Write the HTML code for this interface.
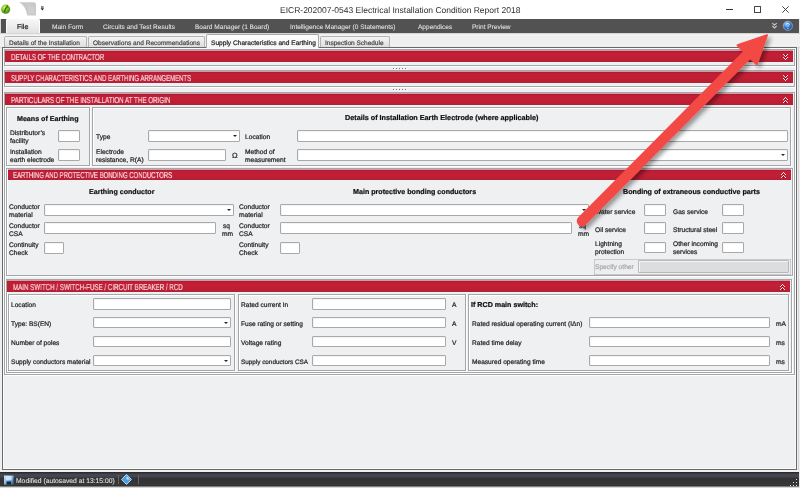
<!DOCTYPE html>
<html><head><meta charset="utf-8"><style>
html,body{margin:0;padding:0;width:800px;height:488px;overflow:hidden;background:#efefef;}
body{position:relative;font-family:"Liberation Sans",sans-serif;-webkit-font-smoothing:antialiased;text-rendering:geometricPrecision;}
body>div,body>svg{position:absolute;}
.t{white-space:nowrap;-webkit-text-stroke-width:0.22px;will-change:transform;}
</style></head><body>
<div style="left:0px;top:0px;width:800px;height:19px;background:#fff"></div>
<svg style="left:0px;top:3px" width="12" height="12" viewBox="0 0 12 12"><defs><radialGradient id="ag" cx="0.38" cy="0.32" r="0.75"><stop offset="0" stop-color="#d6f070"/><stop offset="0.45" stop-color="#86c42a"/><stop offset="1" stop-color="#3a7a0c"/></radialGradient></defs><circle cx="5.6" cy="6.2" r="4.6" fill="url(#ag)"/><path d="M4.2,8.8 C5.8,7.6 4.6,5.6 6.4,4.6 C7.2,4.1 7.6,3.6 7.4,3" fill="none" stroke="#2f6e08" stroke-width="1.3" stroke-linecap="round"/></svg>
<svg style="left:18px;top:1px" width="20" height="16" viewBox="0 0 20 16"><path d="M1,1.2 L16.5,1.2 L18,3 L18,14.6 L9.2,14.6 C8.2,8 5.5,3.5 1,1.2 Z" fill="#c9c9c9"/><rect x="10.6" y="3.5" width="1" height="10" fill="#d8d8d8"/><rect x="12.5" y="6" width="4" height="7" fill="#cfcfcf"/></svg>
<svg style="left:40px;top:5px" width="5" height="7" viewBox="0 0 5 7"><rect x="1" y="1" width="2.6" height="2" fill="#888"/><path d="M0.6,3.2 L4,3.2 L2.3,5.4 Z" fill="#222"/></svg>
<div class="t" style="left:280px;top:2.6999999999999993px;height:14px;line-height:14px;font-size:8.5px;color:#2e2e2e;-webkit-text-stroke-width:0;">EICR-202007-0543 Electrical Installation Condition Report 2018</div>
<div style="left:726px;top:9px;width:7px;height:1px;background:#333"></div>
<div style="left:754px;top:6px;width:7px;height:6.5px;border:1px solid #444;box-sizing:border-box;border-radius:0.5px"></div>
<svg style="left:782px;top:6px" width="7" height="7" viewBox="0 0 7 7"><path d="M0.3,0.3 L6.7,6.7 M6.7,0.3 L0.3,6.7" stroke="#3a3a3a" stroke-width="0.95"/></svg>
<div style="left:0px;top:19px;width:800px;height:14px;background:#525252"></div>
<div style="left:6px;top:19px;width:34px;height:14px;background:linear-gradient(#f8f8f8,#ececec 55%,#e2e2e2);border-radius:1.5px 1.5px 0 0;box-shadow:inset 1px 0 0 #fdfdfd, inset -1px 0 0 #fdfdfd"></div>
<div style="left:0px;top:19px;width:1px;height:14px;background:#d8d8d8"></div>
<div class="t" style="left:17px;top:21.7px;height:12px;line-height:12px;font-size:7px;color:#222;">File</div>
<div class="t" style="left:52.4px;top:21.7px;height:12px;line-height:12px;font-size:6.55px;color:#e6e6e6;white-space:nowrap;-webkit-text-stroke-width:0.05px;">Main Form</div>
<div class="t" style="left:103px;top:21.7px;height:12px;line-height:12px;font-size:6.55px;color:#e6e6e6;white-space:nowrap;-webkit-text-stroke-width:0.05px;">Circuits and Test Results</div>
<div class="t" style="left:195.4px;top:21.7px;height:12px;line-height:12px;font-size:6.55px;color:#e6e6e6;white-space:nowrap;-webkit-text-stroke-width:0.05px;">Board Manager (1 Board)</div>
<div class="t" style="left:290px;top:21.7px;height:12px;line-height:12px;font-size:6.55px;color:#e6e6e6;white-space:nowrap;-webkit-text-stroke-width:0.05px;">Intelligence Manager (0 Statements)</div>
<div class="t" style="left:417.5px;top:21.7px;height:12px;line-height:12px;font-size:6.55px;color:#e6e6e6;white-space:nowrap;-webkit-text-stroke-width:0.05px;">Appendices</div>
<div class="t" style="left:471.7px;top:21.7px;height:12px;line-height:12px;font-size:6.55px;color:#e6e6e6;white-space:nowrap;-webkit-text-stroke-width:0.05px;">Print Preview</div>
<svg style="left:770px;top:21px" width="9" height="9" viewBox="-4.5 -4.5 9 9"><path d="M-2.2,-2.4 L0,-0.4 L2.2,-2.4 M-2.2,0.4 L0,2.4 L2.2,0.4" fill="none" stroke="#d0d0d0" stroke-width="1.1"/></svg>
<svg style="left:782px;top:20px" width="12" height="12" viewBox="0 0 12 12"><defs><radialGradient id="hg" cx="0.35" cy="0.3" r="0.75"><stop offset="0" stop-color="#a8d8f0"/><stop offset="0.45" stop-color="#3c84d8"/><stop offset="1" stop-color="#1646a0"/></radialGradient></defs><circle cx="5.8" cy="5.8" r="4.6" fill="url(#hg)" stroke="#b8c8dc" stroke-width="0.6"/><path d="M4.6,4.4 C4.6,2.9 7.3,2.9 7.3,4.4 C7.3,5.5 5.9,5.5 5.9,6.8" fill="none" stroke="#d8ecfa" stroke-width="1"/><circle cx="5.9" cy="8.3" r="0.6" fill="#d8ecfa"/></svg>
<div style="left:799px;top:19px;width:1px;height:14px;background:#e8e8e8"></div>
<div style="left:0px;top:33px;width:800px;height:15px;background:linear-gradient(#c8c8c8 0px,#e4e4e4 1px,#f8f8f8 2px,#efefef 3px,#efefef 12px,#f5f5f5 12px,#f5f5f5 13px,#dedede 14px)"></div>
<div style="left:4px;top:36px;width:83px;height:11px;background:linear-gradient(#f4f4f4,#e9e9e9 50%,#dedede);border:1px solid #b4b4b4;border-bottom:none;box-sizing:border-box;border-radius:2px 2px 0 0"></div>
<div class="t" style="left:8.5px;top:38.0px;height:12px;line-height:12px;font-size:6.5px;color:#4a4a4a;white-space:nowrap;">Details of the Installation</div>
<div style="left:88px;top:36px;width:117px;height:11px;background:linear-gradient(#f4f4f4,#e9e9e9 50%,#dedede);border:1px solid #b4b4b4;border-bottom:none;box-sizing:border-box;border-radius:2px 2px 0 0"></div>
<div class="t" style="left:92.5px;top:38.0px;height:12px;line-height:12px;font-size:6.5px;color:#4a4a4a;white-space:nowrap;">Observations and Recommendations</div>
<div style="left:320px;top:36px;width:70px;height:11px;background:linear-gradient(#f4f4f4,#e9e9e9 50%,#dedede);border:1px solid #b4b4b4;border-bottom:none;box-sizing:border-box;border-radius:2px 2px 0 0"></div>
<div class="t" style="left:324.5px;top:38.0px;height:12px;line-height:12px;font-size:6.5px;color:#4a4a4a;white-space:nowrap;">Inspection Schedule</div>
<div style="left:798px;top:47px;width:1px;height:423px;background:#d4d4d4"></div>
<div style="left:2px;top:47px;width:795px;height:423px;background:#eff0f2;border:1px solid #6a6a6a;box-sizing:border-box;box-shadow:inset 1px 1px 0 #fafafa, inset -1px -1px 0 #fafafa"></div>
<div style="left:206px;top:34px;width:113px;height:14px;background:linear-gradient(#fdfdfd,#f6f6f6);border:1px solid #a9a9a9;border-bottom:none;box-sizing:border-box;border-radius:2px 2px 0 0"></div>
<div class="t" style="left:211px;top:37.5px;height:12px;line-height:12px;font-size:6.6px;color:#252525;white-space:nowrap;">Supply Characteristics and Earthing</div>
<div style="left:4px;top:49px;width:791px;height:17px;border:1px solid #a4a7aa;box-sizing:border-box;box-shadow:inset 1px 1px 0 #fff, 1px 1px 0 #fff"></div>
<div style="left:5px;top:50px;width:788px;height:12px;background:linear-gradient(#d59aa6 0px,#d59aa6 1px,#b01a30 1px,#c21f36 3px,#c11f35 7px,#b91e33 11px,#a8243a 12px)"></div>
<div class="t" style="left:11px;top:50.7px;height:12px;line-height:12px;font-size:8.5px;color:#f7dde2;transform-origin:0 50%;transform:scaleX(0.715);white-space:nowrap;-webkit-text-stroke-width:0.18px;">DETAILS OF THE CONTRACTOR</div>
<svg style="left:783px;top:54px" width="5" height="6" shape-rendering="crispEdges"><rect x="0" y="0" width="1" height="1" fill="#f6e2e5"/><rect x="4" y="0" width="1" height="1" fill="#f6e2e5"/><rect x="1" y="1" width="1" height="1" fill="#f6e2e5"/><rect x="3" y="1" width="1" height="1" fill="#f6e2e5"/><rect x="2" y="2" width="1" height="1" fill="#f6e2e5"/><rect x="2" y="0" width="1" height="1" fill="#6e0c1c"/><rect x="2" y="1" width="1" height="1" fill="#9a1a2c"/><rect x="0" y="3" width="1" height="1" fill="#f6e2e5"/><rect x="4" y="3" width="1" height="1" fill="#f6e2e5"/><rect x="1" y="4" width="1" height="1" fill="#f6e2e5"/><rect x="3" y="4" width="1" height="1" fill="#f6e2e5"/><rect x="2" y="5" width="1" height="1" fill="#f6e2e5"/><rect x="2" y="3" width="1" height="1" fill="#6e0c1c"/><rect x="2" y="4" width="1" height="1" fill="#9a1a2c"/></svg>
<div style="left:4px;top:70px;width:791px;height:17px;border:1px solid #a4a7aa;box-sizing:border-box;box-shadow:inset 1px 1px 0 #fff, 1px 1px 0 #fff"></div>
<div style="left:5px;top:71px;width:788px;height:12px;background:linear-gradient(#d59aa6 0px,#d59aa6 1px,#b01a30 1px,#c21f36 3px,#c11f35 7px,#b91e33 11px,#a8243a 12px)"></div>
<div class="t" style="left:11px;top:71.7px;height:12px;line-height:12px;font-size:8.5px;color:#f7dde2;transform-origin:0 50%;transform:scaleX(0.706);white-space:nowrap;-webkit-text-stroke-width:0.18px;">SUPPLY CHARACTERISTICS AND EARTHING ARRANGEMENTS</div>
<svg style="left:783px;top:75px" width="5" height="6" shape-rendering="crispEdges"><rect x="0" y="0" width="1" height="1" fill="#f6e2e5"/><rect x="4" y="0" width="1" height="1" fill="#f6e2e5"/><rect x="1" y="1" width="1" height="1" fill="#f6e2e5"/><rect x="3" y="1" width="1" height="1" fill="#f6e2e5"/><rect x="2" y="2" width="1" height="1" fill="#f6e2e5"/><rect x="2" y="0" width="1" height="1" fill="#6e0c1c"/><rect x="2" y="1" width="1" height="1" fill="#9a1a2c"/><rect x="0" y="3" width="1" height="1" fill="#f6e2e5"/><rect x="4" y="3" width="1" height="1" fill="#f6e2e5"/><rect x="1" y="4" width="1" height="1" fill="#f6e2e5"/><rect x="3" y="4" width="1" height="1" fill="#f6e2e5"/><rect x="2" y="5" width="1" height="1" fill="#f6e2e5"/><rect x="2" y="3" width="1" height="1" fill="#6e0c1c"/><rect x="2" y="4" width="1" height="1" fill="#9a1a2c"/></svg>
<div style="left:394px;top:69px;width:1px;height:1px;background:#ffffff"></div>
<div style="left:393px;top:68px;width:1px;height:1px;background:#707070"></div>
<div style="left:397px;top:69px;width:1px;height:1px;background:#ffffff"></div>
<div style="left:396px;top:68px;width:1px;height:1px;background:#707070"></div>
<div style="left:400px;top:69px;width:1px;height:1px;background:#ffffff"></div>
<div style="left:399px;top:68px;width:1px;height:1px;background:#707070"></div>
<div style="left:403px;top:69px;width:1px;height:1px;background:#ffffff"></div>
<div style="left:402px;top:68px;width:1px;height:1px;background:#707070"></div>
<div style="left:406px;top:69px;width:1px;height:1px;background:#ffffff"></div>
<div style="left:405px;top:68px;width:1px;height:1px;background:#707070"></div>
<div style="left:394px;top:90px;width:1px;height:1px;background:#ffffff"></div>
<div style="left:393px;top:89px;width:1px;height:1px;background:#707070"></div>
<div style="left:397px;top:90px;width:1px;height:1px;background:#ffffff"></div>
<div style="left:396px;top:89px;width:1px;height:1px;background:#707070"></div>
<div style="left:400px;top:90px;width:1px;height:1px;background:#ffffff"></div>
<div style="left:399px;top:89px;width:1px;height:1px;background:#707070"></div>
<div style="left:403px;top:90px;width:1px;height:1px;background:#ffffff"></div>
<div style="left:402px;top:89px;width:1px;height:1px;background:#707070"></div>
<div style="left:406px;top:90px;width:1px;height:1px;background:#ffffff"></div>
<div style="left:405px;top:89px;width:1px;height:1px;background:#707070"></div>
<div style="left:4px;top:92px;width:791px;height:283px;border:1px solid #a4a7aa;box-sizing:border-box;box-shadow:inset 1px 1px 0 #fff, 1px 1px 0 #fff"></div>
<div style="left:5px;top:93px;width:788px;height:12px;background:linear-gradient(#d59aa6 0px,#d59aa6 1px,#b01a30 1px,#c21f36 3px,#c11f35 7px,#b91e33 11px,#a8243a 12px)"></div>
<div class="t" style="left:11px;top:93.7px;height:12px;line-height:12px;font-size:8.5px;color:#f7dde2;transform-origin:0 50%;transform:scaleX(0.733);white-space:nowrap;-webkit-text-stroke-width:0.18px;">PARTICULARS OF THE INSTALLATION AT THE ORIGIN</div>
<svg style="left:783px;top:97px" width="5" height="6" shape-rendering="crispEdges"><rect x="0" y="5" width="1" height="1" fill="#f6e2e5"/><rect x="4" y="5" width="1" height="1" fill="#f6e2e5"/><rect x="1" y="4" width="1" height="1" fill="#f6e2e5"/><rect x="3" y="4" width="1" height="1" fill="#f6e2e5"/><rect x="2" y="3" width="1" height="1" fill="#f6e2e5"/><rect x="2" y="5" width="1" height="1" fill="#6e0c1c"/><rect x="2" y="4" width="1" height="1" fill="#9a1a2c"/><rect x="0" y="2" width="1" height="1" fill="#f6e2e5"/><rect x="4" y="2" width="1" height="1" fill="#f6e2e5"/><rect x="1" y="1" width="1" height="1" fill="#f6e2e5"/><rect x="3" y="1" width="1" height="1" fill="#f6e2e5"/><rect x="2" y="0" width="1" height="1" fill="#f6e2e5"/><rect x="2" y="2" width="1" height="1" fill="#6e0c1c"/><rect x="2" y="1" width="1" height="1" fill="#9a1a2c"/></svg>
<div style="left:6px;top:107px;width:84px;height:59px;border:1px solid #a4a7aa;box-sizing:border-box;box-shadow:inset 1px 1px 0 #fff, 1px 1px 0 #fff"></div>
<div class="t" style="left:17px;top:112.6px;height:12px;line-height:12px;font-size:7.1px;color:#111;font-weight:bold;">Means of Earthing</div>
<div class="t" style="left:9.5px;top:128.0px;height:12px;line-height:12px;font-size:6.65px;color:#252525;">Distributor’s</div>
<div class="t" style="left:9.5px;top:136.3px;height:12px;line-height:12px;font-size:6.65px;color:#252525;">facility</div>
<div style="left:58px;top:130px;width:22px;height:12px;background:#fff;border:1px solid #a9a9a9;box-sizing:border-box;border-radius:1px;box-shadow:inset 1px 1px 0 #f4f4f4"></div>
<div class="t" style="left:9.5px;top:147.4px;height:12px;line-height:12px;font-size:6.65px;color:#252525;">Installation</div>
<div class="t" style="left:9.5px;top:154.9px;height:12px;line-height:12px;font-size:6.65px;color:#252525;">earth electrode</div>
<div style="left:58px;top:149px;width:22px;height:12px;background:#fff;border:1px solid #a9a9a9;box-sizing:border-box;border-radius:1px;box-shadow:inset 1px 1px 0 #f4f4f4"></div>
<div style="left:92px;top:107px;width:699px;height:59px;border:1px solid #a4a7aa;box-sizing:border-box;box-shadow:inset 1px 1px 0 #fff, 1px 1px 0 #fff"></div>
<div class="t" style="left:344.7px;top:112.1px;height:12px;line-height:12px;font-size:7.24px;color:#111;font-weight:bold;white-space:nowrap;">Details of Installation Earth Electrode (where applicable)</div>
<div class="t" style="left:95.8px;top:132.2px;height:12px;line-height:12px;font-size:6.65px;color:#252525;">Type</div>
<div style="left:148px;top:130px;width:92px;height:12px;background:#fff;border:1px solid #a9a9a9;box-sizing:border-box;border-radius:1px;box-shadow:inset 1px 1px 0 #f4f4f4"></div>
<div style="left:233px;top:135.0px;width:0;height:0;border-left:2px solid transparent;border-right:2px solid transparent;border-top:2.5px solid #222"></div>
<div class="t" style="left:95.8px;top:146.8px;height:12px;line-height:12px;font-size:6.65px;color:#252525;">Electrode</div>
<div class="t" style="left:95.8px;top:154.9px;height:12px;line-height:12px;font-size:6.65px;color:#252525;">resistance, R(A)</div>
<div style="left:148px;top:149px;width:78px;height:12px;background:#fff;border:1px solid #a9a9a9;box-sizing:border-box;border-radius:1px;box-shadow:inset 1px 1px 0 #f4f4f4"></div>
<div class="t" style="left:232px;top:150.2px;height:12px;line-height:12px;font-size:7.5px;color:#252525;">Ω</div>
<div class="t" style="left:245.4px;top:132.2px;height:12px;line-height:12px;font-size:6.65px;color:#252525;">Location</div>
<div style="left:297px;top:130px;width:491px;height:12px;background:#fff;border:1px solid #a9a9a9;box-sizing:border-box;border-radius:1px;box-shadow:inset 1px 1px 0 #f4f4f4"></div>
<div class="t" style="left:245.4px;top:146.8px;height:12px;line-height:12px;font-size:6.65px;color:#252525;">Method of</div>
<div class="t" style="left:245.4px;top:154.9px;height:12px;line-height:12px;font-size:6.65px;color:#252525;">measurement</div>
<div style="left:297px;top:149px;width:491px;height:12px;background:#fff;border:1px solid #a9a9a9;box-sizing:border-box;border-radius:1px;box-shadow:inset 1px 1px 0 #f4f4f4"></div>
<div style="left:781px;top:154.0px;width:0;height:0;border-left:2px solid transparent;border-right:2px solid transparent;border-top:2.5px solid #222"></div>
<div style="left:6px;top:168px;width:787px;height:108px;border:1px solid #a4a7aa;box-sizing:border-box;box-shadow:inset 1px 1px 0 #fff, 1px 1px 0 #fff"></div>
<div style="left:8px;top:169px;width:783px;height:11px;background:linear-gradient(#d59aa6 0px,#d59aa6 1px,#b01a30 1px,#c21f36 3px,#c11f35 6px,#b91e33 10px,#a8243a 11px)"></div>
<div class="t" style="left:13px;top:169.2px;height:12px;line-height:12px;font-size:8.5px;color:#f7dde2;transform-origin:0 50%;transform:scaleX(0.706);white-space:nowrap;-webkit-text-stroke-width:0.18px;">EARTHING AND PROTECTIVE BONDING CONDUCTORS</div>
<svg style="left:781px;top:172px" width="5" height="6" shape-rendering="crispEdges"><rect x="0" y="5" width="1" height="1" fill="#f6e2e5"/><rect x="4" y="5" width="1" height="1" fill="#f6e2e5"/><rect x="1" y="4" width="1" height="1" fill="#f6e2e5"/><rect x="3" y="4" width="1" height="1" fill="#f6e2e5"/><rect x="2" y="3" width="1" height="1" fill="#f6e2e5"/><rect x="2" y="5" width="1" height="1" fill="#6e0c1c"/><rect x="2" y="4" width="1" height="1" fill="#9a1a2c"/><rect x="0" y="2" width="1" height="1" fill="#f6e2e5"/><rect x="4" y="2" width="1" height="1" fill="#f6e2e5"/><rect x="1" y="1" width="1" height="1" fill="#f6e2e5"/><rect x="3" y="1" width="1" height="1" fill="#f6e2e5"/><rect x="2" y="0" width="1" height="1" fill="#f6e2e5"/><rect x="2" y="2" width="1" height="1" fill="#6e0c1c"/><rect x="2" y="1" width="1" height="1" fill="#9a1a2c"/></svg>
<div class="t" style="left:89px;top:186.1px;height:12px;line-height:12px;font-size:7.1px;color:#111;font-weight:bold;">Earthing conductor</div>
<div class="t" style="left:352.5px;top:186.1px;height:12px;line-height:12px;font-size:7.14px;color:#111;font-weight:bold;white-space:nowrap;">Main protective bonding conductors</div>
<div class="t" style="left:622.5px;top:186.1px;height:12px;line-height:12px;font-size:7.15px;color:#111;font-weight:bold;white-space:nowrap;">Bonding of extraneous conductive parts</div>
<div class="t" style="left:9.3px;top:202.2px;height:12px;line-height:12px;font-size:6.65px;color:#252525;">Conductor</div>
<div class="t" style="left:9.3px;top:210.1px;height:12px;line-height:12px;font-size:6.65px;color:#252525;">material</div>
<div style="left:44px;top:204px;width:190px;height:12px;background:#fff;border:1px solid #a9a9a9;box-sizing:border-box;border-radius:1px;box-shadow:inset 1px 1px 0 #f4f4f4"></div>
<div style="left:227px;top:209.0px;width:0;height:0;border-left:2px solid transparent;border-right:2px solid transparent;border-top:2.5px solid #222"></div>
<div class="t" style="left:9.3px;top:221.2px;height:12px;line-height:12px;font-size:6.65px;color:#252525;">Conductor</div>
<div class="t" style="left:9.3px;top:229.1px;height:12px;line-height:12px;font-size:6.65px;color:#252525;">CSA</div>
<div style="left:44px;top:222px;width:172px;height:12px;background:#fff;border:1px solid #a9a9a9;box-sizing:border-box;border-radius:1px;box-shadow:inset 1px 1px 0 #f4f4f4"></div>
<div class="t" style="left:222.9px;top:221.2px;height:12px;line-height:12px;font-size:6.65px;color:#252525;">sq</div>
<div class="t" style="left:221.9px;top:229.1px;height:12px;line-height:12px;font-size:6.65px;color:#252525;">mm</div>
<div class="t" style="left:9.3px;top:240.3px;height:12px;line-height:12px;font-size:6.65px;color:#252525;">Continuity</div>
<div class="t" style="left:9.3px;top:248.2px;height:12px;line-height:12px;font-size:6.65px;color:#252525;">Check</div>
<div style="left:44px;top:242px;width:20px;height:12px;background:#fff;border:1px solid #a9a9a9;box-sizing:border-box;border-radius:1px;box-shadow:inset 1px 1px 0 #f4f4f4"></div>
<div class="t" style="left:239.3px;top:202.2px;height:12px;line-height:12px;font-size:6.65px;color:#252525;">Conductor</div>
<div class="t" style="left:239.3px;top:210.1px;height:12px;line-height:12px;font-size:6.65px;color:#252525;">material</div>
<div style="left:280px;top:204px;width:309px;height:12px;background:#fff;border:1px solid #a9a9a9;box-sizing:border-box;border-radius:1px;box-shadow:inset 1px 1px 0 #f4f4f4"></div>
<div style="left:582px;top:209.0px;width:0;height:0;border-left:2px solid transparent;border-right:2px solid transparent;border-top:2.5px solid #222"></div>
<div class="t" style="left:239.3px;top:221.2px;height:12px;line-height:12px;font-size:6.65px;color:#252525;">Conductor</div>
<div class="t" style="left:239.3px;top:229.1px;height:12px;line-height:12px;font-size:6.65px;color:#252525;">CSA</div>
<div style="left:280px;top:222px;width:292px;height:12px;background:#fff;border:1px solid #a9a9a9;box-sizing:border-box;border-radius:1px;box-shadow:inset 1px 1px 0 #f4f4f4"></div>
<div class="t" style="left:578.9px;top:221.2px;height:12px;line-height:12px;font-size:6.65px;color:#252525;">sq</div>
<div class="t" style="left:577.9px;top:229.1px;height:12px;line-height:12px;font-size:6.65px;color:#252525;">mm</div>
<div class="t" style="left:239.3px;top:240.3px;height:12px;line-height:12px;font-size:6.65px;color:#252525;">Continuity</div>
<div class="t" style="left:239.3px;top:248.2px;height:12px;line-height:12px;font-size:6.65px;color:#252525;">Check</div>
<div style="left:280px;top:242px;width:20px;height:12px;background:#fff;border:1px solid #a9a9a9;box-sizing:border-box;border-radius:1px;box-shadow:inset 1px 1px 0 #f4f4f4"></div>
<div class="t" style="left:594.9px;top:206.5px;height:12px;line-height:12px;font-size:6.65px;color:#252525;">Water service</div>
<div style="left:644px;top:204px;width:22px;height:12px;background:#fff;border:1px solid #a9a9a9;box-sizing:border-box;border-radius:1px;box-shadow:inset 1px 1px 0 #f4f4f4"></div>
<div class="t" style="left:673.3px;top:206.5px;height:12px;line-height:12px;font-size:6.65px;color:#252525;">Gas service</div>
<div style="left:722px;top:204px;width:22px;height:12px;background:#fff;border:1px solid #a9a9a9;box-sizing:border-box;border-radius:1px;box-shadow:inset 1px 1px 0 #f4f4f4"></div>
<div class="t" style="left:594.9px;top:225.0px;height:12px;line-height:12px;font-size:6.65px;color:#252525;">Oil service</div>
<div style="left:644px;top:222px;width:22px;height:12px;background:#fff;border:1px solid #a9a9a9;box-sizing:border-box;border-radius:1px;box-shadow:inset 1px 1px 0 #f4f4f4"></div>
<div class="t" style="left:673.3px;top:225.0px;height:12px;line-height:12px;font-size:6.65px;color:#252525;">Structural steel</div>
<div style="left:722px;top:222px;width:22px;height:12px;background:#fff;border:1px solid #a9a9a9;box-sizing:border-box;border-radius:1px;box-shadow:inset 1px 1px 0 #f4f4f4"></div>
<div class="t" style="left:594.9px;top:239.2px;height:12px;line-height:12px;font-size:6.65px;color:#252525;">Lightning</div>
<div class="t" style="left:594.9px;top:247.2px;height:12px;line-height:12px;font-size:6.65px;color:#252525;">protection</div>
<div style="left:644px;top:242px;width:22px;height:11px;background:#fff;border:1px solid #a9a9a9;box-sizing:border-box;border-radius:1px;box-shadow:inset 1px 1px 0 #f4f4f4"></div>
<div class="t" style="left:673.3px;top:239.2px;height:12px;line-height:12px;font-size:6.65px;color:#252525;">Other incoming</div>
<div class="t" style="left:673.3px;top:247.2px;height:12px;line-height:12px;font-size:6.65px;color:#252525;">services</div>
<div style="left:722px;top:242px;width:22px;height:11px;background:#fff;border:1px solid #a9a9a9;box-sizing:border-box;border-radius:1px;box-shadow:inset 1px 1px 0 #f4f4f4"></div>
<div style="left:593.5px;top:259px;width:197px;height:16px;border:1px solid #c9cacc;box-sizing:border-box;background:#eceef0"></div>
<div class="t" style="left:595.3px;top:261.8px;height:12px;line-height:12px;font-size:6.65px;color:#a8a8a8;">Specify other</div>
<div style="left:638px;top:260px;width:151px;height:13px;background:#dcdddf;border:1px solid #b9b9b9;box-sizing:border-box;border-radius:1px;box-shadow:inset 1px 1px 0 #f4f4f4"></div>
<div style="left:6px;top:279px;width:786px;height:94px;border:1px solid #a4a7aa;box-sizing:border-box;box-shadow:inset 1px 1px 0 #fff, 1px 1px 0 #fff"></div>
<div style="left:7px;top:280px;width:783px;height:12px;background:linear-gradient(#d59aa6 0px,#d59aa6 1px,#b01a30 1px,#c21f36 3px,#c11f35 7px,#b91e33 11px,#a8243a 12px)"></div>
<div class="t" style="left:13px;top:280.7px;height:12px;line-height:12px;font-size:8.5px;color:#f7dde2;transform-origin:0 50%;transform:scaleX(0.728);white-space:nowrap;-webkit-text-stroke-width:0.18px;">MAIN SWITCH / SWITCH-FUSE / CIRCUIT BREAKER / RCD</div>
<svg style="left:780px;top:284px" width="5" height="6" shape-rendering="crispEdges"><rect x="0" y="5" width="1" height="1" fill="#f6e2e5"/><rect x="4" y="5" width="1" height="1" fill="#f6e2e5"/><rect x="1" y="4" width="1" height="1" fill="#f6e2e5"/><rect x="3" y="4" width="1" height="1" fill="#f6e2e5"/><rect x="2" y="3" width="1" height="1" fill="#f6e2e5"/><rect x="2" y="5" width="1" height="1" fill="#6e0c1c"/><rect x="2" y="4" width="1" height="1" fill="#9a1a2c"/><rect x="0" y="2" width="1" height="1" fill="#f6e2e5"/><rect x="4" y="2" width="1" height="1" fill="#f6e2e5"/><rect x="1" y="1" width="1" height="1" fill="#f6e2e5"/><rect x="3" y="1" width="1" height="1" fill="#f6e2e5"/><rect x="2" y="0" width="1" height="1" fill="#f6e2e5"/><rect x="2" y="2" width="1" height="1" fill="#6e0c1c"/><rect x="2" y="1" width="1" height="1" fill="#9a1a2c"/></svg>
<div style="left:8px;top:294px;width:227px;height:77px;border:1px solid #a4a7aa;box-sizing:border-box;box-shadow:inset 1px 1px 0 #fff, 1px 1px 0 #fff"></div>
<div style="left:238px;top:294px;width:228px;height:77px;border:1px solid #a4a7aa;box-sizing:border-box;box-shadow:inset 1px 1px 0 #fff, 1px 1px 0 #fff"></div>
<div style="left:468px;top:294px;width:321px;height:77px;border:1px solid #a4a7aa;box-sizing:border-box;box-shadow:inset 1px 1px 0 #fff, 1px 1px 0 #fff"></div>
<div class="t" style="left:11.3px;top:299.9px;height:12px;line-height:12px;font-size:6.6px;color:#252525;">Location</div>
<div style="left:93px;top:298px;width:138px;height:12px;background:#fff;border:1px solid #a9a9a9;box-sizing:border-box;border-radius:1px;box-shadow:inset 1px 1px 0 #f4f4f4"></div>
<div class="t" style="left:11.3px;top:318.9px;height:12px;line-height:12px;font-size:6.6px;color:#252525;">Type: BS(EN)</div>
<div style="left:93px;top:317px;width:138px;height:11px;background:#fff;border:1px solid #a9a9a9;box-sizing:border-box;border-radius:1px;box-shadow:inset 1px 1px 0 #f4f4f4"></div>
<div style="left:224px;top:321.5px;width:0;height:0;border-left:2px solid transparent;border-right:2px solid transparent;border-top:2.5px solid #222"></div>
<div class="t" style="left:11.3px;top:337.9px;height:12px;line-height:12px;font-size:6.6px;color:#252525;">Number of poles</div>
<div style="left:93px;top:336px;width:138px;height:11px;background:#fff;border:1px solid #a9a9a9;box-sizing:border-box;border-radius:1px;box-shadow:inset 1px 1px 0 #f4f4f4"></div>
<div class="t" style="left:11.3px;top:356.9px;height:12px;line-height:12px;font-size:6.6px;color:#252525;">Supply conductors material</div>
<div style="left:93px;top:355px;width:138px;height:11px;background:#fff;border:1px solid #a9a9a9;box-sizing:border-box;border-radius:1px;box-shadow:inset 1px 1px 0 #f4f4f4"></div>
<div style="left:224px;top:359.5px;width:0;height:0;border-left:2px solid transparent;border-right:2px solid transparent;border-top:2.5px solid #222"></div>
<div class="t" style="left:241.2px;top:299.9px;height:12px;line-height:12px;font-size:6.6px;color:#252525;">Rated current In</div>
<div style="left:312px;top:298px;width:134px;height:12px;background:#fff;border:1px solid #a9a9a9;box-sizing:border-box;border-radius:1px;box-shadow:inset 1px 1px 0 #f4f4f4"></div>
<div class="t" style="left:452px;top:299.9px;height:12px;line-height:12px;font-size:6.65px;color:#252525;">A</div>
<div class="t" style="left:241.2px;top:318.9px;height:12px;line-height:12px;font-size:6.6px;color:#252525;">Fuse rating or setting</div>
<div style="left:312px;top:317px;width:134px;height:11px;background:#fff;border:1px solid #a9a9a9;box-sizing:border-box;border-radius:1px;box-shadow:inset 1px 1px 0 #f4f4f4"></div>
<div class="t" style="left:452px;top:318.9px;height:12px;line-height:12px;font-size:6.65px;color:#252525;">A</div>
<div class="t" style="left:241.2px;top:337.9px;height:12px;line-height:12px;font-size:6.6px;color:#252525;">Voltage rating</div>
<div style="left:312px;top:336px;width:134px;height:11px;background:#fff;border:1px solid #a9a9a9;box-sizing:border-box;border-radius:1px;box-shadow:inset 1px 1px 0 #f4f4f4"></div>
<div class="t" style="left:452px;top:337.9px;height:12px;line-height:12px;font-size:6.65px;color:#252525;">V</div>
<div class="t" style="left:241.2px;top:356.9px;height:12px;line-height:12px;font-size:6.35px;color:#252525;">Supply conductors CSA</div>
<div style="left:312px;top:355px;width:134px;height:11px;background:#fff;border:1px solid #a9a9a9;box-sizing:border-box;border-radius:1px;box-shadow:inset 1px 1px 0 #f4f4f4"></div>
<div class="t" style="left:471px;top:299.2px;height:12px;line-height:12px;font-size:7.15px;color:#111;font-weight:bold;">If RCD main switch:</div>
<div class="t" style="left:472px;top:318.9px;height:12px;line-height:12px;font-size:6.6px;color:#252525;white-space:nowrap;">Rated residual operating current (IΔn)</div>
<div style="left:589px;top:317px;width:181px;height:11px;background:#fff;border:1px solid #a9a9a9;box-sizing:border-box;border-radius:1px;box-shadow:inset 1px 1px 0 #f4f4f4"></div>
<div class="t" style="left:776px;top:318.9px;height:12px;line-height:12px;font-size:6.65px;color:#252525;">mA</div>
<div class="t" style="left:472px;top:337.9px;height:12px;line-height:12px;font-size:6.6px;color:#252525;white-space:nowrap;">Rated time delay</div>
<div style="left:589px;top:336px;width:181px;height:11px;background:#fff;border:1px solid #a9a9a9;box-sizing:border-box;border-radius:1px;box-shadow:inset 1px 1px 0 #f4f4f4"></div>
<div class="t" style="left:776px;top:337.9px;height:12px;line-height:12px;font-size:6.65px;color:#252525;">ms</div>
<div class="t" style="left:472px;top:356.9px;height:12px;line-height:12px;font-size:6.6px;color:#252525;white-space:nowrap;">Measured operating time</div>
<div style="left:589px;top:355px;width:181px;height:11px;background:#fff;border:1px solid #a9a9a9;box-sizing:border-box;border-radius:1px;box-shadow:inset 1px 1px 0 #f4f4f4"></div>
<div class="t" style="left:776px;top:356.9px;height:12px;line-height:12px;font-size:6.65px;color:#252525;">ms</div>
<div style="left:0px;top:472px;width:800px;height:16px;background:linear-gradient(#2b2b2b 0px,#2b2b2b 1px,#464653 2px,#444450 5px,#333336 6px,#353535 12px,#3d3d3d 13px,#262626 14px,#d8d8d8 15px)"></div>
<svg style="left:4px;top:475px" width="10" height="10" viewBox="0 0 10 10"><defs><linearGradient id="fg" x1="0" y1="0" x2="1" y2="1"><stop offset="0" stop-color="#cfe6fb"/><stop offset="0.6" stop-color="#78aee0"/><stop offset="1" stop-color="#2c5a8c"/></linearGradient></defs><rect x="0" y="0.5" width="9.5" height="9" fill="url(#fg)"/><rect x="2" y="1" width="5.5" height="4" fill="#e6f2fc" opacity="0.7"/><path d="M2.5,9.5 L2.5,6.5 L7,6.5 L7,9.5 Z" fill="#16263a"/></svg>
<div class="t" style="left:16px;top:475.8px;height:12px;line-height:12px;font-size:6.75px;color:#e2e2e2;white-space:nowrap;-webkit-text-stroke-width:0.08px;">Modified (autosaved at 13:15:00)</div>
<div style="left:118px;top:475px;width:1px;height:9px;background:#666"></div>
<svg style="left:121px;top:474px" width="11" height="11" viewBox="0 0 11 11"><path d="M5.5,0.5 L10.5,5.5 L5.5,10.5 L0.5,5.5 Z" fill="#4aa0e8" stroke="#d8ecff" stroke-width="0.8"/><path d="M5.5,2 L9,5.5 L5.5,5.5 Z" fill="#bfe2ff"/></svg>
<div style="left:138px;top:475px;width:1px;height:9px;background:#666"></div>
<div style="left:796px;top:479px;width:1px;height:1px;background:#e0e0e0"></div>
<div style="left:793px;top:482px;width:1px;height:1px;background:#e0e0e0"></div>
<div style="left:796px;top:482px;width:1px;height:1px;background:#e0e0e0"></div>
<div style="left:790px;top:485px;width:1px;height:1px;background:#e0e0e0"></div>
<div style="left:793px;top:485px;width:1px;height:1px;background:#e0e0e0"></div>
<div style="left:796px;top:485px;width:1px;height:1px;background:#e0e0e0"></div>
<div style="left:799px;top:472px;width:1px;height:16px;background:#e6e6e6"></div>
<svg style="left:0;top:0" width="800" height="488" viewBox="0 0 800 488">
<defs><filter id="sh" x="-20%" y="-20%" width="140%" height="140%"><feGaussianBlur in="SourceAlpha" stdDeviation="2.2"/><feOffset dx="2.5" dy="3"/><feComponentTransfer><feFuncA type="linear" slope="0.38"/></feComponentTransfer><feMerge><feMergeNode/><feMergeNode in="SourceGraphic"/></feMerge></filter></defs>
<g filter="url(#sh)">
<line x1="582" y1="221" x2="749" y2="53" stroke="#f34a45" stroke-width="10.5" stroke-linecap="round"/>
<path d="M767,35.2 L737.6,45.2 L756.8,64.2 Z" fill="#f34a45" stroke="#f34a45" stroke-width="2" stroke-linejoin="round"/>
</g></svg>
</body></html>
